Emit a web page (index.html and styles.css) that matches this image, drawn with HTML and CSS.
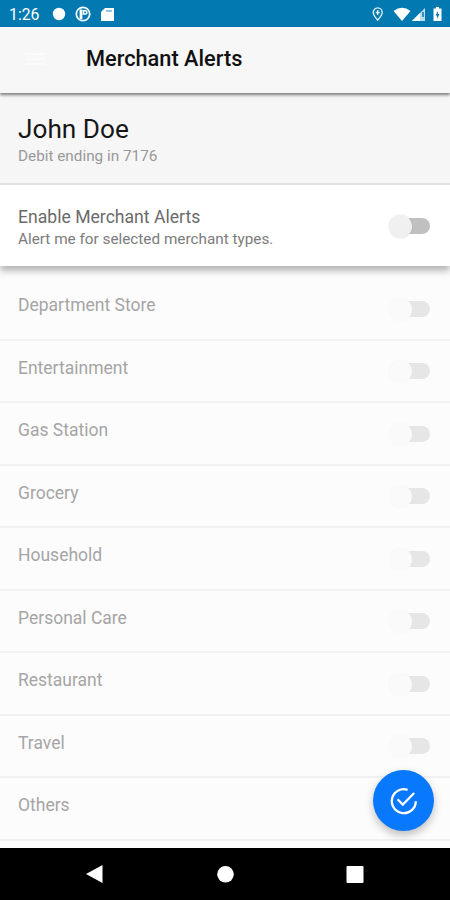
FILE: index.html
```html
<!DOCTYPE html>
<html lang="en">
<head>
<meta charset="utf-8">
<title>Merchant Alerts</title>
<link rel="stylesheet" href="styles.css">
</head>
<body>
<div class="screen">
  <div class="status">
    <span class="time">1:26</span>
    <svg class="notices" viewBox="0 0 64 16" width="64" height="16">
      <circle cx="7" cy="8" r="6.2" fill="#fff"/>
      <circle cx="31" cy="8" r="6.7" fill="none" stroke="#fff" stroke-width="1.7"/>
      <path d="M27.600 3.500h2.800v9.500h-2.800z" fill="#fff"/>
      <path d="M31.500 4.800h1.800a1.500 1.500 0 0 1 0 3.200h-1.800z" fill="none" stroke="#fff" stroke-width="1.600"/>
      <path d="M53 2h9v13H49V6z" fill="#fff"/>
      <path d="M54 5h6" stroke="#0279b1" stroke-width="1.200" stroke-opacity=".7"/>
    </svg>
    <svg class="signals" viewBox="0 0 72 16" width="72" height="16">
      <path d="M5.7 14.2C3.2 11 1.2 8.9 1.2 6.4a4.5 4.5 0 0 1 9 0c0 2.500-2 4.600-4.500 7.800z" fill="none" stroke="#e5f2f8" stroke-width="1.3"/>
      <path d="M5.700 4v5M3.700 6.500h4" stroke="#e5f2f8" stroke-width="1.300"/>
      <path d="M21.500 5Q30 -1.500 38.500 5L30 15z" fill="#fff"/>
      <path d="M40 15L53 2v13z" fill="#bddceb"/>
      <path d="M40 15l8-8v8z" fill="#fff"/>
      <path d="M51 6v5" stroke="#0279b1" stroke-width="1.500"/>
      <path d="M61.500 2.500H64V1h3v1.500h2.500V15h-8z" fill="#fff"/>
      <path d="M66 5l-2.500 4.500h1.500V13l2.500-5H66z" fill="#0279b1"/>
    </svg>
  </div>
  <header class="appbar">
    <svg class="menu" viewBox="0 0 20 14" width="20" height="14"><path d="M0 2h20M0 7h20M0 12h20" stroke="#fbfbfb" stroke-width="2"/></svg>
    <h1>Merchant Alerts</h1>
  </header>
  <section class="profile">
    <h2>John Doe</h2>
    <p>Debit ending in 7176</p>
  </section>
  <section class="enable">
    <div>
      <h3>Enable Merchant Alerts</h3>
      <p>Alert me for selected merchant types.</p>
    </div>
    <span class="toggle"></span>
  </section>
  <ul class="list">
    <li><span class="label">Department Store</span><span class="toggle off"></span></li>
    <li><span class="label">Entertainment</span><span class="toggle off"></span></li>
    <li><span class="label">Gas Station</span><span class="toggle off"></span></li>
    <li><span class="label">Grocery</span><span class="toggle off"></span></li>
    <li><span class="label">Household</span><span class="toggle off"></span></li>
    <li><span class="label">Personal Care</span><span class="toggle off"></span></li>
    <li><span class="label">Restaurant</span><span class="toggle off"></span></li>
    <li><span class="label">Travel</span><span class="toggle off"></span></li>
    <li><span class="label">Others</span><span class="toggle off"></span></li>
  </ul>
  <nav class="navbar">
    <svg viewBox="0 0 450 52" width="450" height="52" fill="#fff">
      <path d="M86 26L102.500 17v18z"/>
      <circle cx="225.500" cy="26.300" r="8.300"/>
      <rect x="346.500" y="18" width="17" height="17" rx="1"/>
    </svg>
  </nav>
  <div class="fab">
    <svg viewBox="0 0 30 30" width="30" height="30" fill="none" stroke="#fff" stroke-width="2.300">
      <path d="M18.600 3.800A12 12 0 1 0 26.800 15.200"/>
      <path d="M8.600 13.300l5.200 5.200L25.200 7"/>
    </svg>
  </div>
</div>
</body>
</html>
```
FILE: styles.css
```css
* { box-sizing: border-box; margin: 0; padding: 0; }
body { font-family: Roboto, sans-serif; font-weight: 400; }
.screen {
  position: relative;
  width: 450px;
  height: 900px;
  display: flex;
  flex-direction: column;
  overflow: hidden;
  background: #fff;
}
.status {
  flex: none;
  height: 27px;
  background: #0279b1;
  display: flex;
  align-items: center;
  padding: 0 6px 0 9px;
  color: #fff;
}
.time { width: 43px; font-size: 15.8px; padding-top: 1px; }
.signals { margin-left: auto; }
.appbar {
  flex: none;
  position: relative;
  z-index: 1;
  height: 66px;
  background: #f7f7f7;
  display: flex;
  align-items: center;
  padding: 0 25px 2px;
  box-shadow: 0 2px 3px rgba(0, 0, 0, .5);
}
h1 { margin-left: 41px; font-size: 21.75px; line-height: 28px; font-weight: 500; color: #111; white-space: nowrap; }
.profile {
  flex: none;
  height: 92px;
  padding: 20px 18px 0;
  background: #f6f6f6;
  border-bottom: 2px solid #e0e0e0;
}
h2 { font-size: 26.2px; line-height: 32px; font-weight: 400; color: #161616; }
.profile p { font-size: 15.3px; line-height: 20px; margin-top: 1px; color: #999; }
.enable {
  flex: none;
  position: relative;
  height: 81px;
  padding: 0 20px 0 18px;
  display: flex;
  align-items: center;
  justify-content: space-between;
  background: #fff;
  box-shadow: 0 5px 7px rgba(0, 0, 0, .28);
  clip-path: inset(0 0 -16px 0);
  z-index: 1;
}
h3 { font-size: 17.6px; line-height: 23px; font-weight: 400; color: #6a6a6a; }
.enable p { font-size: 15.3px; line-height: 21px; color: #7c7c7c; }
.enable > div { padding-top: 4px; }
.toggle {
  position: relative;
  width: 38px;
  height: 16px;
  border-radius: 8px;
  background: #c0c0c0;
}
.toggle::before {
  content: "";
  position: absolute;
  left: -3px;
  top: -3px;
  width: 23px;
  height: 23px;
  border-radius: 50%;
  background: #f0f0f0;
  box-shadow: 0 0 2px rgba(0, 0, 0, .12);
}
.toggle.off { background: #e6e6e6; }
.toggle.off::before { background: #fafafa; box-shadow: 0 0 1px rgba(0, 0, 0, .05); }
.list {
  flex: none;
  height: 574px;
  padding-top: 12px;
  list-style: none;
  background: #fcfcfc;
}
.list li {
  height: 62.5px;
  padding: 1px 20px 0 18px;
  display: flex;
  align-items: center;
  justify-content: space-between;
  border-bottom: 2px solid #f1f1f1;
}
.label { font-size: 17.5px; line-height: 24px; color: #a5a5a5; padding-bottom: 7px; }
.navbar { height: 52px; margin-top: auto; background: #000; }
.navbar svg { display: block; }
.fab {
  position: absolute;
  z-index: 2;
  left: 373px;
  top: 770px;
  width: 61px;
  height: 61px;
  border-radius: 50%;
  background: #0878fc;
  display: flex;
  align-items: center;
  justify-content: center;
  box-shadow: 0 4px 8px rgba(0, 0, 0, .25);
}
```
